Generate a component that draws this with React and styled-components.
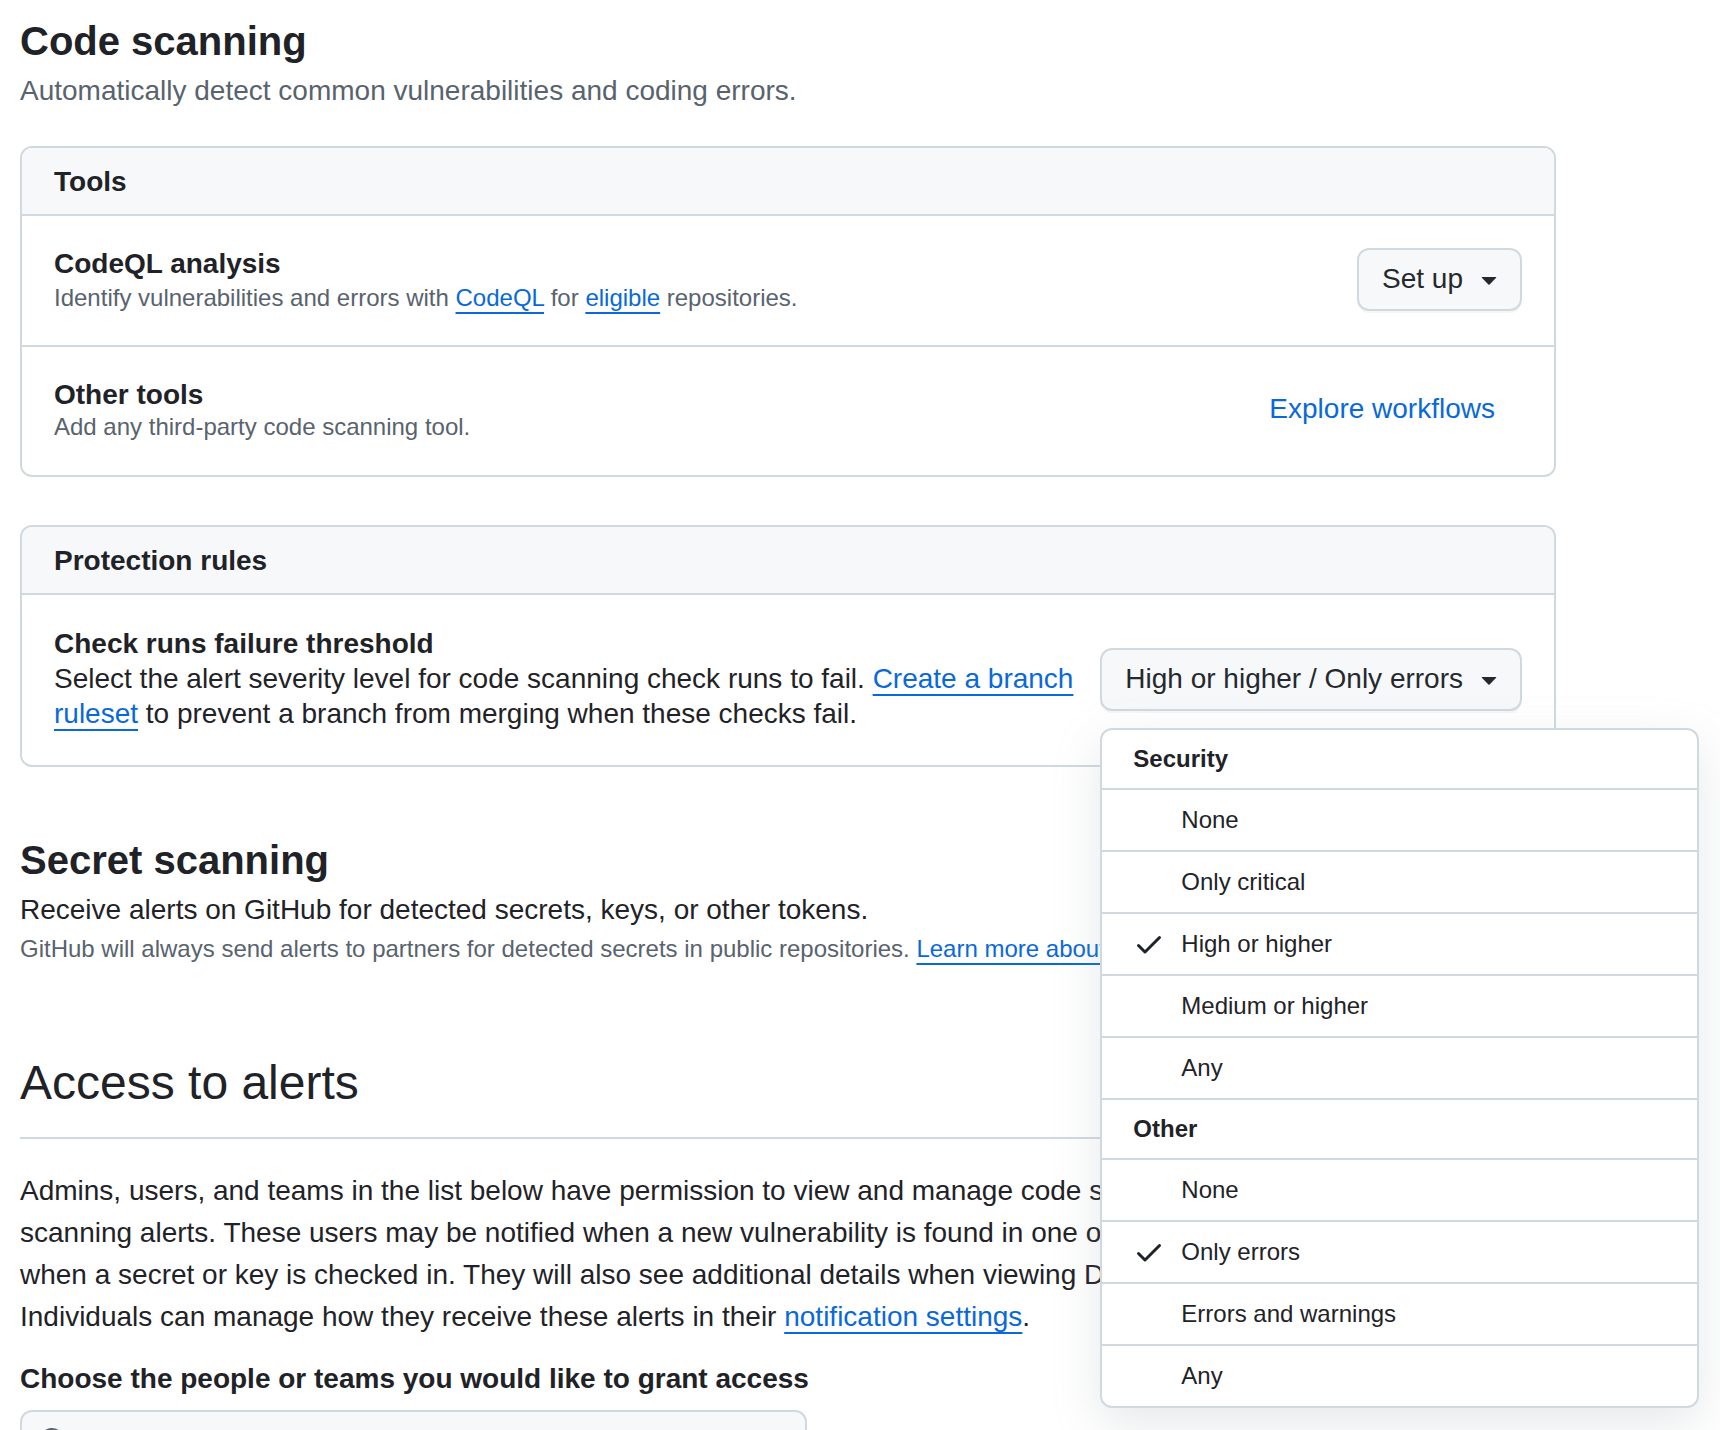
import React from 'react';
import styled, { createGlobalStyle } from 'styled-components';

const GlobalStyle = createGlobalStyle`
  html, body {
    margin: 0;
    padding: 0;
    background: #ffffff;
    overflow: hidden;
  }
  body {
    font-family: "Liberation Sans", Arial, sans-serif;
    color: #1f2328;
  }
  * {
    box-sizing: border-box;
  }
`;

const TriangleDown = () => (
  <svg viewBox="0 0 16 16" aria-hidden="true">
    <path d="m4.427 7.427 3.396 3.396a.25.25 0 0 0 .354 0l3.396-3.396A.25.25 0 0 0 11.396 7H4.604a.25.25 0 0 0-.177.427Z" />
  </svg>
);

const CheckIcon = () => (
  <svg viewBox="0 0 16 16" aria-hidden="true">
    <path d="M13.78 4.22a.75.75 0 0 1 0 1.06l-7.25 7.25a.75.75 0 0 1-1.06 0L2.22 9.28a.751.751 0 0 1 .018-1.042.751.751 0 0 1 1.042-.018L6 10.94l6.72-6.72a.75.75 0 0 1 1.06 0Z" />
  </svg>
);

const SearchIcon = () => (
  <svg viewBox="0 0 16 16" aria-hidden="true">
    <path d="M10.68 11.74a6 6 0 0 1-7.922-8.982 6 6 0 0 1 8.982 7.922l3.04 3.04a.749.749 0 0 1-.326 1.275.749.749 0 0 1-.734-.215ZM11.5 7a4.499 4.499 0 1 0-8.997 0A4.499 4.499 0 0 0 11.5 7Z" />
  </svg>
);

const securityLevels = [
  { label: 'None' },
  { label: 'Only critical' },
  { label: 'High or higher', checked: true },
  { label: 'Medium or higher' },
  { label: 'Any' },
];

const otherLevels = [
  { label: 'None' },
  { label: 'Only errors', checked: true },
  { label: 'Errors and warnings' },
  { label: 'Any' },
];

const App = () => {
  return (
    <>
      <GlobalStyle />
      <Page>
        <SubheadTitle>Code scanning</SubheadTitle>
        <Description $muted>Automatically detect common vulnerabilities and coding errors.</Description>

        <Box $gap={34}>
          <BoxHeader>Tools</BoxHeader>
          <BoxRow $pad="29px 32px 32px">
            <RowText>
              <RowTitle $lh={38}>CodeQL analysis</RowTitle>
              <RowNote $lh={30}>
                Identify vulnerabilities and errors with <Link href="#">CodeQL</Link> for{' '}
                <Link href="#">eligible</Link> repositories.
              </RowNote>
            </RowText>
            <Button type="button">
              Set up
              <TriangleDown />
            </Button>
          </BoxRow>
          <BoxRow $pad="30px 32px 34px">
            <RowText>
              <RowTitle $lh={36}>Other tools</RowTitle>
              <RowNote $lh={28}>Add any third-party code scanning tool.</RowNote>
            </RowText>
            <PlainLink href="#">Explore workflows</PlainLink>
          </BoxRow>
        </Box>

        <Box $gap={48}>
          <BoxHeader>Protection rules</BoxHeader>
          <BoxRow $pad="32px 32px 34px">
            <RowText>
              <RowTitle $lh={34}>Check runs failure threshold</RowTitle>
              <RowBody>
                Select the alert severity level for code scanning check runs to fail.{' '}
                <Link href="#">Create a branch ruleset</Link> to prevent a branch from merging when these
                checks fail.
              </RowBody>
            </RowText>
            <MenuAnchor>
              <Button type="button">
                High or higher / Only errors
                <TriangleDown />
              </Button>
              <Menu>
                <MenuHeader>Security</MenuHeader>
                {securityLevels.map((item) => (
                  <MenuItem key={'s-' + item.label}>
                    <CheckSlot>{item.checked && <CheckIcon />}</CheckSlot>
                    {item.label}
                  </MenuItem>
                ))}
                <MenuHeader>Other</MenuHeader>
                {otherLevels.map((item) => (
                  <MenuItem key={'o-' + item.label}>
                    <CheckSlot>{item.checked && <CheckIcon />}</CheckSlot>
                    {item.label}
                  </MenuItem>
                ))}
              </Menu>
            </MenuAnchor>
          </BoxRow>
        </Box>

        <SecretTitle>Secret scanning</SecretTitle>
        <Description>Receive alerts on GitHub for detected secrets, keys, or other tokens.</Description>
        <Note>
          GitHub will always send alerts to partners for detected secrets in public repositories.{' '}
          <Link href="#">Learn more about partner patterns</Link>.
        </Note>

        <LargeHead>
          <LargeTitle>Access to alerts</LargeTitle>
        </LargeHead>
        <Paragraph>
          Admins, users, and teams in the list below have permission to view and manage code scanning,
          Dependabot, or secret scanning alerts. These users may be notified when a new vulnerability is
          found in one of this repository's dependencies and when a secret or key is checked in. They will
          also see additional details when viewing Dependabot security updates. Individuals can manage how
          they receive these alerts in their <Link href="#">notification settings</Link>.
        </Paragraph>
        <FieldLabel>Choose the people or teams you would like to grant access</FieldLabel>
        <SearchField>
          <SearchIcon />
          <input type="text" placeholder="Search for people or teams" />
        </SearchField>
      </Page>
    </>
  );
};

export default App;

const Page = styled.div`
  width: 1536px;
  margin-left: 20px;
  padding-top: 16px;
`;

const SubheadTitle = styled.h2`
  margin: 0;
  font-size: 40px;
  line-height: 50px;
  font-weight: 700;
  color: #1f2328;
`;

const SecretTitle = styled(SubheadTitle)`
  margin-top: 68px;
`;

const Description = styled.p`
  margin: 4px 0 0;
  font-size: 28px;
  line-height: 42px;
  color: ${(props) => (props.$muted ? '#59636e' : '#1f2328')};
`;

const Note = styled.p`
  margin: 0;
  font-size: 24px;
  line-height: 36px;
  color: #59636e;
  white-space: nowrap;
`;

const Box = styled.div`
  margin-top: ${(props) => props.$gap}px;
  border: 2px solid #d1d9e0;
  border-radius: 12px;
`;

const BoxHeader = styled.div`
  padding: 13px 32px 11px;
  background: #f6f8fa;
  border-bottom: 2px solid #d1d9e0;
  border-radius: 10px 10px 0 0;
  font-size: 28px;
  line-height: 42px;
  font-weight: 700;
  color: #1f2328;
`;

const BoxRow = styled.div`
  display: flex;
  align-items: center;
  justify-content: space-between;
  gap: 16px;
  padding: ${(props) => props.$pad};
  & + & {
    border-top: 2px solid #d1d9e0;
  }
`;

const RowText = styled.div`
  flex: 1;
  min-width: 0;
`;

const RowTitle = styled.div`
  font-size: 28px;
  line-height: ${(props) => props.$lh}px;
  font-weight: 700;
  color: #1f2328;
`;

const RowNote = styled.div`
  font-size: 24px;
  line-height: ${(props) => props.$lh}px;
  color: #59636e;
`;

const RowBody = styled.div`
  font-size: 28px;
  line-height: 35px;
  color: #1f2328;
`;

const Link = styled.a`
  color: #0969da;
  text-decoration: underline;
  text-decoration-thickness: 2px;
  text-underline-offset: 6px;
`;

const PlainLink = styled.a`
  flex: none;
  margin-right: 27px;
  font-size: 28px;
  line-height: 42px;
  color: #0969da;
  text-decoration: none;
`;

const Button = styled.button`
  flex: none;
  display: inline-flex;
  align-items: center;
  gap: 10px;
  height: 63px;
  padding: 0 15px 0 23px;
  border: 2px solid #d1d9e0;
  border-radius: 12px;
  background: #f6f8fa;
  box-shadow: 0 2px 0 rgba(31, 35, 40, 0.04);
  font-family: inherit;
  font-size: 28px;
  line-height: 42px;
  color: #25292e;
  white-space: nowrap;
  cursor: pointer;
  svg {
    width: 32px;
    height: 32px;
    fill: #25292e;
  }
`;

const MenuAnchor = styled.div`
  position: relative;
  flex: none;
`;

const Menu = styled.div`
  position: absolute;
  top: calc(100% + 17px);
  left: 0;
  z-index: 10;
  width: 599px;
  background: #ffffff;
  border: 2px solid #d1d9e0;
  border-radius: 12px;
  box-shadow: 0 16px 48px rgba(140, 149, 159, 0.22);
  overflow: hidden;
  & > * + * {
    border-top: 2px solid #d1d9e0;
  }
`;

const MenuHeader = styled.div`
  box-sizing: content-box;
  height: 58px;
  display: flex;
  align-items: center;
  padding-left: 31px;
  font-size: 24px;
  font-weight: 700;
  color: #1f2328;
`;

const MenuItem = styled.div`
  box-sizing: content-box;
  height: 60px;
  display: flex;
  align-items: center;
  gap: 16px;
  padding-left: 31px;
  font-size: 24px;
  color: #1f2328;
`;

const CheckSlot = styled.span`
  display: flex;
  width: 32px;
  height: 32px;
  svg {
    width: 32px;
    height: 32px;
    fill: #1f2328;
  }
`;

const LargeHead = styled.div`
  margin-top: 86px;
  padding-bottom: 24px;
  border-bottom: 2px solid #d1d9e0;
`;

const LargeTitle = styled.h2`
  margin: 0;
  font-size: 48px;
  line-height: 60px;
  font-weight: 400;
  color: #1f2328;
`;

const Paragraph = styled.p`
  margin: 31px 0 0;
  font-size: 28px;
  line-height: 42px;
  color: #1f2328;
`;

const FieldLabel = styled.div`
  margin-top: 20px;
  font-size: 28px;
  line-height: 42px;
  font-weight: 700;
  color: #1f2328;
`;

const SearchField = styled.label`
  margin-top: 10px;
  width: 787px;
  height: 64px;
  display: flex;
  align-items: center;
  gap: 18px;
  padding: 0 16px;
  border: 2px solid #d1d9e0;
  border-radius: 12px;
  background: #f6f8fa;
  svg {
    flex: none;
    width: 32px;
    height: 32px;
    fill: #59636e;
  }
  input {
    flex: 1;
    border: 0;
    outline: none;
    background: transparent;
    font-family: inherit;
    font-size: 28px;
    color: #1f2328;
  }
  input::placeholder {
    color: #59636e;
  }
`;
